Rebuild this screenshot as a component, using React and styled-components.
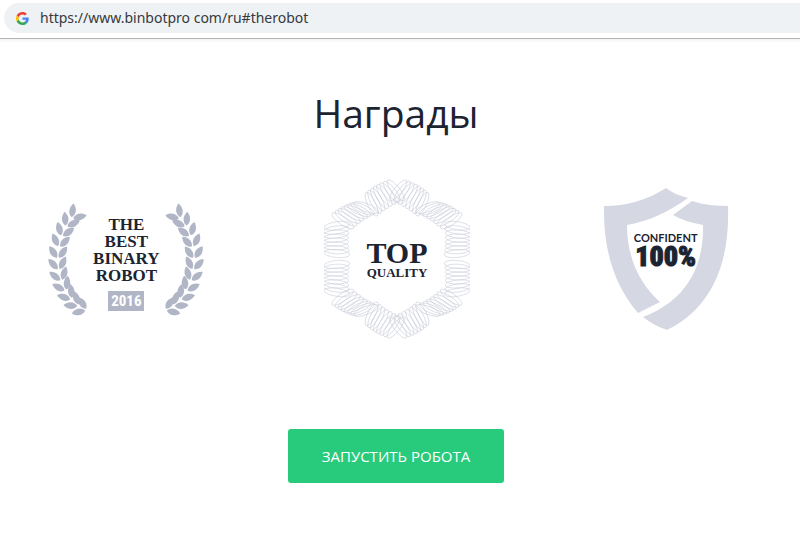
import React from 'react';
import styled, { createGlobalStyle } from 'styled-components';

const GlobalStyle = createGlobalStyle`
  * { box-sizing: border-box; }
  body { margin: 0; background: #fff; color: #1c2331; font-family: "Open Sans", "Noto Sans", sans-serif; }
`;

const Toolbar = styled.header`
  padding: 3px 0 5px 4px;
  border-bottom: 1px solid #b4b4b4;
  box-shadow: 0 1px 4px rgba(0, 0, 0, 0.08);
`;

const AddressBar = styled.label`
  display: flex;
  align-items: center;
  gap: 11px;
  height: 30px;
  padding-left: 12px;
  background: #eff2f4;
  border-radius: 15px 0 0 15px;
`;

const AddressInput = styled.input`
  flex: 1;
  min-width: 0;
  padding: 0;
  border: 0;
  outline: 0;
  background: transparent;
  color: #36393d;
  font: 14px/20px "Noto Sans", "Open Sans", sans-serif;
`;

const Awards = styled.main`
  display: flex;
  flex-direction: column;
  align-items: center;
  padding: 44px 0 56px;
`;

const Title = styled.h1`
  margin: 0 8px 0 0;
  font-size: 39px;
  line-height: 60px;
  font-weight: 400;
`;

const AwardList = styled.ul`
  display: grid;
  grid-template-columns: repeat(3, 1fr);
  align-items: center;
  width: 100%;
  margin: 36px 0 0;
  padding: 0;
  list-style: none;
`;

const Award = styled.li`
  display: flex;
  justify-content: center;
  padding-right: ${(p) => p.$right};
`;

const Badge = styled.div`
  display: grid;
  place-items: center;
  > * { grid-area: 1 / 1; }
`;

const Caption = styled.div`
  display: flex;
  flex-direction: column;
  align-items: center;
  text-align: center;
  font-family: "Liberation Serif", serif;
  font-weight: 700;
  padding: ${(p) => p.$pad || '0'};
`;

const Line = styled.span`
  font-family: ${(p) => p.$font || 'inherit'};
  font-size: ${(p) => p.$size}px;
  line-height: ${(p) => p.$height}px;
  font-weight: ${(p) => p.$weight || 700};
  -webkit-text-stroke: ${(p) => (p.$heavy ? '1px' : '0')} currentColor;
`;

const Year = styled.span`
  margin-top: 7px;
  padding: 0 3px;
  background: #b1b6c6;
  color: #fff;
  font: 700 15px/20px "Roboto Condensed", Roboto, sans-serif;
`;

const LaunchButton = styled.button`
  width: 216px;
  height: 54px;
  margin: 90px 8px 0 0;
  padding: 0;
  border: 0;
  border-radius: 3px;
  background: #28ca7c;
  color: #fff;
  font: 15px/20px "Open Sans", "Noto Sans", sans-serif;
  cursor: pointer;
`;

function GoogleIcon() {
  return (
    <svg width="13" height="13" viewBox="0 0 48 48" aria-hidden="true">
      <path fill="#EA4335" d="M24 9.5c3.54 0 6.71 1.22 9.21 3.6l6.85-6.85C35.9 2.38 30.47 0 24 0 14.62 0 6.51 5.38 2.56 13.22l7.98 6.19C12.43 13.72 17.74 9.5 24 9.5z" />
      <path fill="#4285F4" d="M46.98 24.55c0-1.57-.15-3.09-.38-4.55H24v9.02h12.94c-.58 2.96-2.26 5.48-4.78 7.18l7.73 6c4.51-4.18 7.09-10.36 7.09-17.65z" />
      <path fill="#FBBC05" d="M10.53 28.59A14.5 14.5 0 0 1 9.77 24c0-1.6.27-3.14.76-4.59l-7.98-6.19A23.9 23.9 0 0 0 0 24c0 3.88.92 7.54 2.56 10.78z" />
      <path fill="#34A853" d="M24 48c6.48 0 11.93-2.13 15.89-5.81l-7.73-6c-2.15 1.45-4.92 2.3-8.16 2.3-6.26 0-11.57-4.22-13.47-9.91l-7.98 6.19C6.51 42.62 14.62 48 24 48z" />
    </svg>
  );
}

const rad = (deg) => (deg * Math.PI) / 180;

const LEAF = 'M0 0C2 -5 8 -6.200 13.5 -3C10 2.4 4 3.4 0 0Z';
const TWIG = Array.from({ length: 11 }, (_, i) => {
  const t = rad(107 + i * 12.4);
  return {
    x: 50 + 39 * Math.cos(t),
    y: 57 + 53 * Math.sin(t),
    a: (Math.atan2(53 * Math.cos(t), -39 * Math.sin(t)) * 180) / Math.PI,
  };
});

function Branch() {
  return TWIG.map(({ x, y, a }, i) => (
    <g key={i} transform={`translate(${x} ${y}) rotate(${a})`}>
      <path d={LEAF} transform="translate(0 -1) rotate(-22)" />
      <path d={LEAF} transform="translate(0 1) rotate(22) scale(1 -1)" />
    </g>
  ));
}

function Laurel() {
  return (
    <svg width="158" height="114" viewBox="0 0 158 114" fill="#b1b6c6" aria-hidden="true">
      <Branch />
      <g transform="translate(158 0) scale(-1 1)"><Branch /></g>
    </svg>
  );
}

const LOOPS = [0, 1, 2].flatMap((group) =>
  Array.from({ length: 8 }, (_, n) => {
    const angle = 1 + group * 30 + n * 3.4;
    const fromSide = (angle % 60) - 30;
    const r = 61 / Math.cos(rad(fromSide)) - 1 + 1.5 * Math.sin(rad(n * 25));
    return {
      x: r * Math.sin(rad(angle)),
      y: -r * Math.cos(rad(angle)),
      turn: 15 + group * 30 + 24 - n * 2,
    };
  }),
);

const QUADRANTS = ['1 1', '-1 1', '1 -1', '-1 -1'];

function Rosette() {
  return (
    <svg width="146" height="160" viewBox="-73 -80 146 160" fill="none" stroke="#cbceda" strokeWidth="0.6" aria-hidden="true">
      {QUADRANTS.map((mirror) => (
        <g key={mirror} transform={`scale(${mirror})`}>
          {LOOPS.map(({ x, y, turn }) => (
            <ellipse key={turn + x} rx="4" ry="13" transform={`translate(${x} ${y}) rotate(${turn})`} />
          ))}
        </g>
      ))}
    </svg>
  );
}

function Shield() {
  return (
    <svg width="126" height="144" viewBox="603 187 126 144" fill="#d5d8e2" aria-hidden="true">
      <path d="M604 206C627 206 647 200 666 188C673 193 680 196 688 198C668 212 650 221 627 225C627 257 639 283 660 302L638 313C615 286 603 251 604 206Z" />
      <path d="M692 201C704 205 716 206 728 206C730 263 712 308 667 330C658 327 651 323 643 317C682 302 704 272 703 225C692 223 682 220 673 215Z" />
    </svg>
  );
}

export default function App() {
  return (
    <>
      <GlobalStyle />
      <Toolbar>
        <AddressBar>
          <GoogleIcon />
          <AddressInput aria-label="URL" defaultValue="https://www.binbotpro com/ru#therobot" />
        </AddressBar>
      </Toolbar>
      <Awards>
        <Title>Награды</Title>
        <AwardList>
          <Award $right="14px">
            <Badge>
              <Laurel />
              <Caption $pad="8px 0 0">
                <Line $size={17} $height={17}>THE</Line>
                <Line $size={17} $height={17}>BEST</Line>
                <Line $size={17} $height={17}>BINARY</Line>
                <Line $size={17} $height={17}>ROBOT</Line>
                <Year>2016</Year>
              </Caption>
            </Badge>
          </Award>
          <Award $right="6px">
            <Badge>
              <Rosette />
              <Caption>
                <Line $size={30} $height={26}>TOP</Line>
                <Line $size={13} $height={13}>QUALITY</Line>
              </Caption>
            </Badge>
          </Award>
          <Award $right="2px">
            <Badge>
              <Shield />
              <Caption $pad="0 0 16px">
                <Line $font="Lato, sans-serif" $size={11} $height={12}>CONFIDENT</Line>
                <Line $font='"Roboto Condensed", Roboto, sans-serif' $size={28} $height={26} $weight={900} $heavy>100%</Line>
              </Caption>
            </Badge>
          </Award>
        </AwardList>
        <LaunchButton type="button">ЗАПУСТИТЬ РОБОТА</LaunchButton>
      </Awards>
    </>
  );
}
